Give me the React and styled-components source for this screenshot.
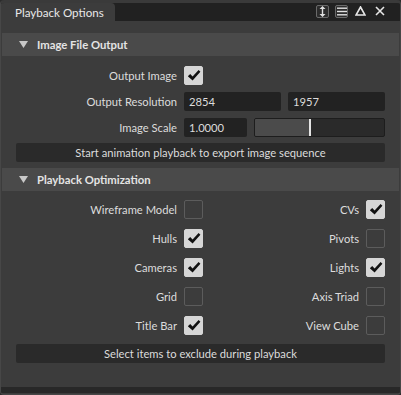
import styled, { createGlobalStyle } from 'styled-components';

const Global = createGlobalStyle`
	html, body {
		margin: 0;
		padding: 0;
		background: #2b2b2b;
	}
	body {
		font-family: Lato, 'Noto Sans', sans-serif;
		font-size: 11.2px;
		color: #dcdcdc;
	}
`;

const optimizeRows = [
	{ left: 'Wireframe Model', leftOn: false, right: 'CVs', rightOn: true },
	{ left: 'Hulls', leftOn: true, right: 'Pivots', rightOn: false },
	{ left: 'Cameras', leftOn: true, right: 'Lights', rightOn: true },
	{ left: 'Grid', leftOn: false, right: 'Axis Triad', rightOn: false },
	{ left: 'Title Bar', leftOn: true, right: 'View Cube', rightOn: false },
];

function Check({ on }) {
	return (
		<CheckBox $on={on}>
			{on && (
				<svg width="14" height="13" viewBox="0 0 14 13">
					<path d="M0.8 7.2 L3.2 5 L5.6 7.6 L11.6 1 L13.4 2.8 L5.6 11.6 Z" fill="#111" />
				</svg>
			)}
		</CheckBox>
	);
}

function Caret() {
	return (
		<svg width="9" height="7" viewBox="0 0 9 7">
			<path d="M0 0 H9 L4.5 7 Z" fill="#c8c8c8" />
		</svg>
	);
}

export default function App() {
	return (
		<>
			<Global />
			<Window>
				<TitleBar>
					<Tab>Playback Options</Tab>
					<Icons>
						<IconBox>
							<svg width="9" height="11" viewBox="0 0 9 11">
								<path d="M4.5 0 L7.5 3 H1.5 Z M4.5 11 L7.5 8 H1.5 Z" fill="#e0e0e0" />
								<rect x="3.8" y="2.5" width="1.4" height="6" fill="#e0e0e0" />
							</svg>
						</IconBox>
						<IconBox>
							<svg width="10" height="9" viewBox="0 0 10 9">
								<rect x="0" y="0.5" width="10" height="1.4" fill="#e0e0e0" />
								<rect x="0" y="3.8" width="10" height="1.4" fill="#e0e0e0" />
								<rect x="0" y="7.1" width="10" height="1.4" fill="#e0e0e0" />
							</svg>
						</IconBox>
						<IconPlain>
							<svg width="11" height="10" viewBox="0 0 11 10">
								<path d="M5.5 1 L10 9 H1 Z" fill="none" stroke="#e6e6e6" strokeWidth="1.6" />
							</svg>
						</IconPlain>
						<IconPlain>
							<svg width="10" height="10" viewBox="0 0 10 10">
								<path d="M1 1 L9 9 M9 1 L1 9" stroke="#e6e6e6" strokeWidth="1.6" />
							</svg>
						</IconPlain>
					</Icons>
				</TitleBar>
				<Panel>
					<SectionHeader>
						<Caret />
						<span>Image File Output</span>
					</SectionHeader>
					<Form>
						<Label>Output Image</Label>
						<Controls>
							<Check on />
						</Controls>
						<Label>Output Resolution</Label>
						<Controls $cols="1fr 1fr">
							<Field>2854</Field>
							<Field>1957</Field>
						</Controls>
						<Label>Image Scale</Label>
						<Controls $cols="63px 1fr">
							<Field>1.0000</Field>
							<Slider>
								<SliderFill style={{ width: `${(56 / 130) * 100}%` }} />
							</Slider>
						</Controls>
					</Form>
					<WideButton>Start animation playback to export image sequence</WideButton>
					<SectionHeader>
						<Caret />
						<span>Playback Optimization</span>
					</SectionHeader>
					<CheckGrid>
						{optimizeRows.map((r) => (
							<CheckRow key={r.left}>
								<Label>{r.left}</Label>
								<Check on={r.leftOn} />
								<Label>{r.right}</Label>
								<Check on={r.rightOn} />
							</CheckRow>
						))}
					</CheckGrid>
					<WideButton>Select items to exclude during playback</WideButton>
				</Panel>
				<BottomStrip />
			</Window>
		</>
	);
}

const Window = styled.div`
	width: 401px;
	height: 395px;
	box-sizing: border-box;
	display: flex;
	flex-direction: column;
	background: #3c3c3c;
	border: 1px solid #474747;
	border-top: 3px solid #3a3a3a;
	border-radius: 4px;
	overflow: hidden;
`;

const TitleBar = styled.div`
	height: 18px;
	display: flex;
	align-items: stretch;
	justify-content: space-between;
	background: #212121;
	flex-shrink: 0;
`;

const Tab = styled.div`
	width: 114px;
	box-sizing: border-box;
	padding: 2px 0 0 14px;
	background: #3c3c3c;
	border-top-right-radius: 4px;
	color: #e8e8e8;
	font-size: 11.6px;
	line-height: 16px;
`;

const Icons = styled.div`
	display: flex;
	align-items: center;
	gap: 6px;
	padding-right: 14px;
	margin-top: -2px;
`;

const IconBox = styled.div`
	width: 13px;
	height: 13px;
	box-sizing: border-box;
	border: 1px solid #6a6a6a;
	border-radius: 2px;
	background: #2c2c2c;
	display: flex;
	align-items: center;
	justify-content: center;
`;

const IconPlain = styled.div`
	width: 13px;
	height: 13px;
	display: flex;
	align-items: center;
	justify-content: center;
`;

const Panel = styled.div`
	flex: 1;
	display: flex;
	flex-direction: column;
	padding: 12px 1px 0;
	background: #3c3c3c;
`;

const SectionHeader = styled.div`
	height: 23px;
	display: flex;
	align-items: center;
	gap: 9px;
	padding-left: 17px;
	background: #4a4a4a;
	font-weight: 700;
	color: #e4e4e4;
	font-size: 11.3px;
`;

const Form = styled.div`
	display: grid;
	grid-template-columns: 175px 201px;
	column-gap: 7px;
	row-gap: 7px;
	padding: 10px 0 6px;
	align-items: center;
`;

const Label = styled.div`
	text-align: right;
	color: #dcdcdc;
	white-space: nowrap;
`;

const Controls = styled.div`
	display: grid;
	grid-template-columns: ${(p) => p.$cols || 'auto'};
	justify-content: start;
	column-gap: 7px;
	min-height: 19px;
	align-items: center;
`;

const Field = styled.div`
	height: 19px;
	box-sizing: border-box;
	background: #222222;
	border-radius: 2px;
	padding-left: 5px;
	line-height: 19px;
	color: #dcdcdc;
`;

const Slider = styled.div`
	height: 19px;
	box-sizing: border-box;
	background: #2a2a2a;
	border: 1px solid #1d1d1d;
	border-radius: 2px;
	overflow: hidden;
`;

const SliderFill = styled.div`
	height: 100%;
	background: #4b4b4b;
	border-right: 2px solid #e4e4e4;
	box-sizing: border-box;
`;

const WideButton = styled.div`
	margin: 0 14px 6px;
	height: 19px;
	background: #2a2a2a;
	border-radius: 2px;
	text-align: center;
	line-height: 19px;
	color: #dcdcdc;
`;

const CheckGrid = styled.div`
	display: flex;
	flex-direction: column;
	gap: 10px;
	padding: 9px 0 9px;
`;

const CheckRow = styled.div`
	display: grid;
	grid-template-columns: 175px 19px 1fr 19px;
	column-gap: 7px;
	align-items: center;
	padding-right: 14px;
`;

const CheckBox = styled.div`
	width: 19px;
	height: 19px;
	box-sizing: border-box;
	border-radius: 2px;
	border: 1px solid ${(p) => (p.$on ? '#d6d6d6' : '#5c5c5c')};
	background: ${(p) => (p.$on ? '#d6d6d6' : 'transparent')};
	display: flex;
	align-items: center;
	justify-content: center;
`;

const BottomStrip = styled.div`
	height: 6px;
	margin-bottom: 1px;
	background: #282828;
	flex-shrink: 0;
`;
